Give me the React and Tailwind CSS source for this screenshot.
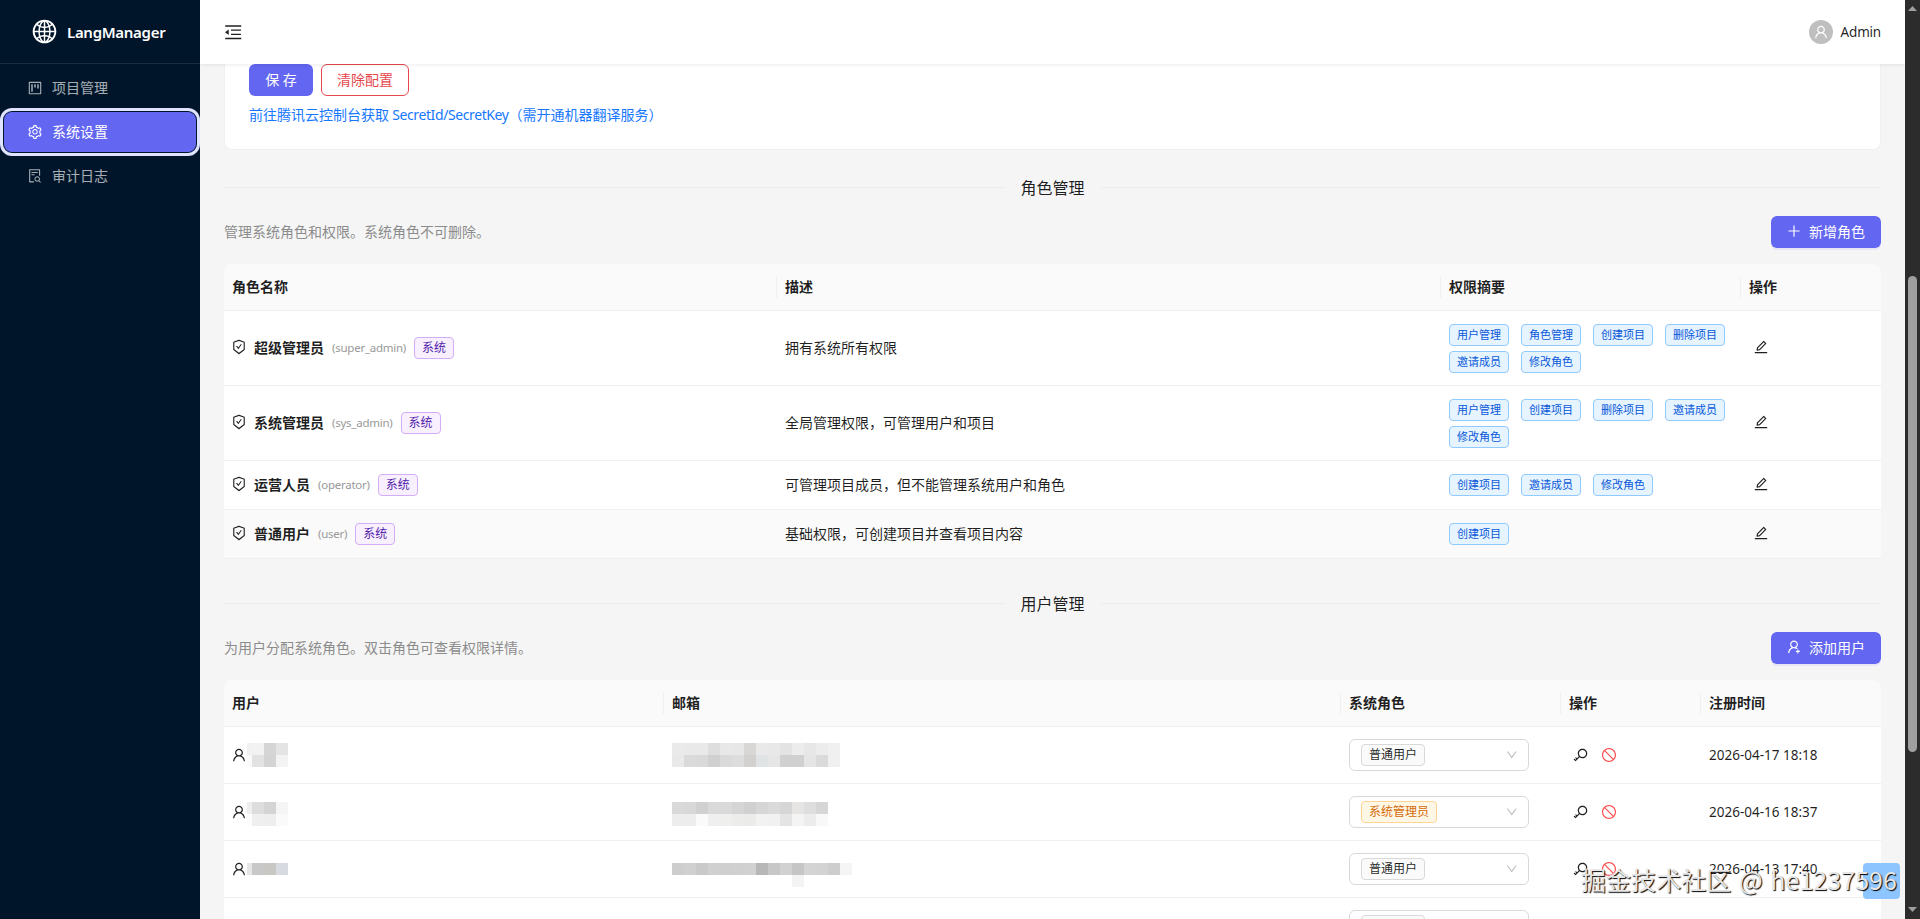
import {
  AiOutlineDown,
  AiOutlineEdit,
  AiOutlineFileSearch,
  AiOutlineGlobal,
  AiOutlineKey,
  AiOutlineMenuFold,
  AiOutlinePlus,
  AiOutlineProject,
  AiOutlineSafetyCertificate,
  AiOutlineSetting,
  AiOutlineStop,
  AiOutlineUser,
  AiOutlineUserAdd,
} from 'react-icons/ai';

const menuItems = [
  { label: '项目管理', Icon: AiOutlineProject },
  { label: '系统设置', Icon: AiOutlineSetting, active: true },
  { label: '审计日志', Icon: AiOutlineFileSearch },
];

const roles = [
  {
    name: '超级管理员',
    code: 'super_admin',
    desc: '拥有系统所有权限',
    perms: ['用户管理', '角色管理', '创建项目', '删除项目', '邀请成员', '修改角色'],
  },
  {
    name: '系统管理员',
    code: 'sys_admin',
    desc: '全局管理权限，可管理用户和项目',
    perms: ['用户管理', '创建项目', '删除项目', '邀请成员', '修改角色'],
  },
  {
    name: '运营人员',
    code: 'operator',
    desc: '可管理项目成员，但不能管理系统用户和角色',
    perms: ['创建项目', '邀请成员', '修改角色'],
  },
  { name: '普通用户', code: 'user', desc: '基础权限，可创建项目并查看项目内容', perms: ['创建项目'], hovered: true },
];

// names and emails are masked, each entry is a row of 12px blocks
const users = [
  {
    role: '普通用户',
    time: '2026-04-17 18:18',
    name: [
      ['#f1f1f1', '#f2f2f2', '#d5d5d5', '#e4e4e4'],
      ['#fafafa', '#e2e2e2', '#d4d4d4', '#f3f3f3'],
    ],
    email: [
      ['#eaeaea', '#e9e9e9', '#e9e9e9', '#dedede', '#e8e8e8', '#e7e7e7', '#d8d7d6', '#e9e9e9', '#e8e8e8', '#e3e3e3', '#ececec', '#e7e7e7', '#ececec', '#f0f0f0'],
      ['#e9e9e9', '#dadada', '#d9d9d9', '#d0d0d0', '#dadada', '#dcdddc', '#d2d1cf', '#e0e3e3', '#e6e6e6', '#d0d0d0', '#d0d0d0', '#e5e5e5', '#dadada', '#f0f0f0'],
    ],
  },
  {
    role: '系统管理员',
    time: '2026-04-16 18:37',
    shift: 'pt-1',
    name: [
      ['#eeeeee', '#dddddd', '#d4d4d4', '#f5f5f5'],
      ['#fcfcfc', '#efefef', '#eeeeee', '#fafafa'],
    ],
    email: [
      ['#d9d9d9', '#d8d8d8', '#d0d0d0', '#d9d9d9', '#dadada', '#d5d5d5', '#d0d0d0', '#d6d6d6', '#dadada', '#d6d6d6', '#e7e5e3', '#dedede', '#d6d6d6'],
      ['#ededed', '#ededed', '#fafafa', '#efefef', '#efefee', '#ececea', '#ebebe9', '#f2f2f2', '#f1f1f1', '#e4e4e4', '#f4f4f4', '#ececec', '#f8f8f8'],
    ],
  },
  {
    role: '普通用户',
    time: '2026-04-13 17:40',
    shift: 'pt-[11px]',
    name: [
      ['#e6e6e6', '#c8c8c8', '#c9c7c4', '#d8dae2'],
      ['#ffffff', '#ffffff', '#ffffff', '#ffffff'],
    ],
    email: [
      ['#cdcdcd', '#d0d0d0', '#c9c9c9', '#d0d0d0', '#cfcfcf', '#d0d0d0', '#d1d1d1', '#b7b7b7', '#c7c7c7', '#d1d1d1', '#c5c5c5', '#d4d4d4', '#d3d3d3', '#cdcdcd', '#f5f5f5'],
      ['#ffffff', '#ffffff', '#ffffff', '#ffffff', '#ffffff', '#ffffff', '#ffffff', '#ffffff', '#ffffff', '#ffffff', '#f4f4f4', '#ffffff', '#ffffff', '#ffffff', '#ffffff'],
    ],
  },
  { role: '普通用户', time: '', name: [], email: [], empty: true },
];

const Mosaic = ({ rows, narrow }) => (
  <div>
    {rows.map((row, i) => (
      <div key={i} className="flex h-3">
        {row.map((color, j) => (
          <span key={j} className={narrow && j === 0 ? 'h-3 w-[5px]' : 'h-3 w-3'} style={{ backgroundColor: color }} />
        ))}
      </div>
    ))}
  </div>
);

const Th = ({ children, last }) => (
  <th className="h-[47px] border-b border-[#f0f0f0] bg-[#fafafa] p-0 text-left font-semibold first:rounded-tl-lg last:rounded-tr-lg">
    <div className={`flex h-[22px] items-center pl-2 ${last ? '' : 'border-r border-[#f0f0f0]'}`}>{children}</div>
  </th>
);

const Title = ({ children }) => (
  <div className="flex h-6 items-center gap-4 text-base">
    <span className="mb-0.5 h-px flex-1 bg-[#ededed]" />
    <span>{children}</span>
    <span className="mb-0.5 h-px flex-1 bg-[#ededed]" />
  </div>
);

const Toolbar = ({ tip, Icon, action }) => (
  <div className="my-4 flex h-8 items-center justify-between">
    <span className="text-[#8c8c8c]">{tip}</span>
    <button className="flex h-8 w-[110px] items-center justify-center gap-2 rounded-md bg-[#6366f1] text-white shadow-[0_2px_0_rgba(99,102,241,0.1)]">
      <Icon className="-mx-px mb-0.5 text-base" />
      {action}
    </button>
  </div>
);

const Sidebar = () => (
  <aside className="w-[200px] shrink-0 bg-[#001529] text-white/65">
    <div className="flex h-16 items-center gap-[9px] border-b border-white/10 pl-[31px] text-white">
      <AiOutlineGlobal className="text-[27px]" />
      <span className="text-[15px] font-semibold tracking-[-0.3px]">LangManager</span>
    </div>
    <nav className="flex flex-col gap-1 p-1">
      {menuItems.map(({ label, Icon, active }) => (
        <a
          key={label}
          className={`flex h-10 items-center gap-2.5 rounded-lg pl-6 ${
            active ? 'bg-[#6366f1] text-white outline-3 outline-offset-1 outline-[#dfe3ff]' : ''
          }`}
        >
          <Icon className="-mx-px text-base" />
          {label}
        </a>
      ))}
    </nav>
  </aside>
);

const Header = () => (
  <header className="z-10 flex h-16 shrink-0 items-center justify-between bg-white px-6 shadow-[0_1px_4px_rgba(0,0,0,0.08)]">
    <AiOutlineMenuFold className="-ml-px text-[20.5px]" />
    <div className="flex items-center gap-2">
      <span className="flex size-6 items-center justify-center rounded-full bg-[#bfbfbf] text-base text-white">
        <AiOutlineUser />
      </span>
      <span className="text-[13.5px] tracking-[-0.2px]">Admin</span>
    </div>
  </header>
);

const RoleTable = () => (
  <table className="w-full table-fixed border-separate border-spacing-0">
    <colgroup>
      <col className="w-[553px]" />
      <col className="w-[664px]" />
      <col className="w-[300px]" />
      <col className="w-[140px]" />
    </colgroup>
    <thead>
      <tr>
        <Th>角色名称</Th>
        <Th>描述</Th>
        <Th>权限摘要</Th>
        <Th last>操作</Th>
      </tr>
    </thead>
    <tbody>
      {roles.map((role) => (
        <tr
          key={role.code}
          className={`h-[49px] *:border-b *:border-[#f0f0f0] ${role.hovered ? 'bg-[#fafafa]' : 'bg-white'}`}
        >
          <td className="px-2">
            <div className="flex items-center gap-2">
              <AiOutlineSafetyCertificate className="-mx-px mb-0.5 text-base" />
              <strong className="font-semibold">{role.name}</strong>
              <span className="text-[11.5px] tracking-[-0.25px] text-[#999999]">({role.code})</span>
              <span className="h-[22px] rounded border border-[#d3adf7] bg-[#f9f0ff] px-[7px] text-xs leading-5 text-[#531dab]">
                系统
              </span>
            </div>
          </td>
          <td className="px-2">{role.desc}</td>
          <td className="px-2 pt-[13px] pb-3 align-top">
            <div className="flex flex-wrap gap-x-3 gap-y-[5px]">
              {role.perms.map((perm) => (
                <span
                  key={perm}
                  className="h-[22px] rounded border border-[#91caff] bg-[#e6f4ff] px-[7px] text-[11px] leading-5 text-[#0958d9]"
                >
                  {perm}
                </span>
              ))}
            </div>
          </td>
          <td className="pl-3">
            <AiOutlineEdit className="mb-0.5 text-base" />
          </td>
        </tr>
      ))}
    </tbody>
  </table>
);

const UserTable = () => (
  <table className="w-full table-fixed border-separate border-spacing-0">
    <colgroup>
      <col className="w-[440px]" />
      <col className="w-[677px]" />
      <col className="w-[220px]" />
      <col className="w-[140px]" />
      <col className="w-[180px]" />
    </colgroup>
    <thead>
      <tr>
        <Th>用户</Th>
        <Th>邮箱</Th>
        <Th>系统角色</Th>
        <Th>操作</Th>
        <Th last>注册时间</Th>
      </tr>
    </thead>
    <tbody>
      {users.map((user, i) => (
        <tr key={i} className="h-[57px] bg-white *:border-b *:border-[#f0f0f0]">
          <td className="px-2">
            <div className="flex items-center gap-px">
              {!user.empty && <AiOutlineUser className="-mx-px text-base" />}
              <div className={user.shift}>
                <Mosaic rows={user.name} narrow />
              </div>
            </div>
          </td>
          <td className={`px-2 ${user.shift || ''}`}>
            <Mosaic rows={user.email} />
          </td>
          <td className="px-2">
            <div className="flex h-8 w-[180px] items-center justify-between rounded-md border border-[#d9d9d9] pr-2.5 pl-[11px]">
              <span
                className={`h-[22px] rounded border px-[7px] text-xs leading-5 ${
                  user.role === '系统管理员'
                    ? 'border-[#ffd591] bg-[#fff7e6] text-[#d46b08]'
                    : 'border-[#d9d9d9] bg-[#fafafa]'
                }`}
              >
                {user.role}
              </span>
              <AiOutlineDown className="text-[13.5px] text-[#bfbfbf]" />
            </div>
          </td>
          <td className="pl-3">
            {!user.empty && (
              <div className="flex gap-3 text-base">
                <AiOutlineKey />
                <AiOutlineStop className="text-[#ff4d4f]" />
              </div>
            )}
          </td>
          <td className="px-2 text-[13.5px]">{user.time}</td>
        </tr>
      ))}
    </tbody>
  </table>
);

const Scrollbar = () => (
  <div className="flex w-[15px] shrink-0 flex-col items-center bg-[#2c2c2c]">
    <svg className="mt-1.5 h-[5px] w-[9px] fill-[#9f9f9f]" viewBox="0 0 9 5">
      <path d="M0 5 4.5 0 9 5z" />
    </svg>
    <span className="mt-[265px] h-[476px] w-[9px] rounded-full bg-[#9f9f9f]" />
    <svg className="mt-auto mb-[7px] h-[5px] w-[9px] fill-[#9f9f9f]" viewBox="0 0 9 5">
      <path d="M0 0h9L4.5 5z" />
    </svg>
  </div>
);

const App = () => (
  <div className="relative flex h-[919px] w-full overflow-hidden bg-[#f5f5f5] font-['Noto_Sans','Noto_Sans_CJK_SC',sans-serif] text-sm leading-[22px] text-black/88">
    <Sidebar />
    <div className="flex min-w-0 flex-1 flex-col overflow-hidden">
      <Header />
      <main className="px-6">
        <section className="h-[86px] rounded-b-lg border-x border-b border-[#f0f0f0] bg-white px-6">
          <div className="flex gap-2">
            <button className="h-8 w-16 rounded-md bg-[#6366f1] text-white">保 存</button>
            <button className="h-8 w-[88px] rounded-md border border-[#e5484d] text-[#e5484d]">清除配置</button>
          </div>
          <a className="mt-2 block tracking-[-0.4px] text-[#1677ff]">
            <span className="tracking-normal">前往腾讯云控制台获取</span> SecretId/SecretKey
            <span className="tracking-normal">（需开通机器翻译服务）</span>
          </a>
        </section>
        <div className="mt-[26px]">
          <Title>角色管理</Title>
          <Toolbar tip="管理系统角色和权限。系统角色不可删除。" Icon={AiOutlinePlus} action="新增角色" />
          <RoleTable />
        </div>
        <div className="mt-[33px]">
          <Title>用户管理</Title>
          <Toolbar tip="为用户分配系统角色。双击角色可查看权限详情。" Icon={AiOutlineUserAdd} action="添加用户" />
          <UserTable />
        </div>
      </main>
    </div>
    <Scrollbar />
    <div className="absolute top-[863px] left-[1863px] h-9 w-[37px] rounded bg-[#8cc5ff]" />
    <div className="absolute top-[861px] left-[1581px] font-['Noto_Sans_CJK_SC',sans-serif] text-[25px] leading-9 tracking-[0.05px] [word-spacing:2px] whitespace-nowrap text-[#e6e6e6] [text-shadow:1px_1px_1px_#000]">
      掘金技术社区 @ he1237596
    </div>
  </div>
);

export default App;
